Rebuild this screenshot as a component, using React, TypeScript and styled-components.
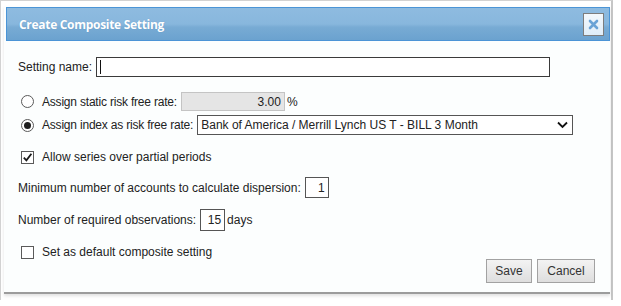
import React from "react";
import styled, { createGlobalStyle } from "styled-components";

const Global = createGlobalStyle`
  html, body { margin: 0; padding: 0; background: #ffffff; }
  body { font-family: "Segoe UI", "Liberation Sans", Arial, sans-serif; font-size: 12px; color: #222; }
  * { box-sizing: border-box; }
`;

const Frame = styled.div`
  width: 613px;
  height: 300px;
  border-left: 1px solid #d2d2d2;
  border-top: 1px solid #d2d2d2;
  border-right: 2px solid #c6c6c6;
  padding: 5px 1px 0 3px;
`;

const Dialog = styled.div`
  height: 288px;
  background: #fcfefe;
  border-bottom: 2px solid #9c9c9c;
  box-shadow: 0 2px 3px rgba(0, 0, 0, 0.12);
  display: flex;
  flex-direction: column;
`;

const TitleBar = styled.div`
  margin: 1px 0 0 2px;
  height: 34px;
  border: 1px solid #4b94d6;
  background: linear-gradient(180deg, #8ebbe0 0%, #88b7dd 50%, #78abd4 60%, #6ba2cf 100%);
  display: flex;
  align-items: center;
  justify-content: space-between;
  padding: 0 5px 0 12px;
`;

const Title = styled.div`
  color: #ffffff;
  font-family: "Open Sans", "Noto Sans", sans-serif;
  font-weight: 700;
  font-size: 12px;
  letter-spacing: -0.3px;
  text-shadow: 0 0 1px rgba(60, 110, 160, 0.4);
`;

const CloseButton = styled.div`
  width: 21px;
  height: 23px;
  border: 1px solid #7d7d7d;
  background: linear-gradient(180deg, #f3f8fc 0%, #dfedf8 100%);
  display: flex;
  align-items: center;
  justify-content: center;
`;

const Body = styled.div`
  flex: 1;
  padding: 16px 16px 0 14px;
  display: flex;
  flex-direction: column;
  position: relative;
`;

const Row = styled.div<{ $mt?: number }>`
  display: flex;
  align-items: center;
  margin-top: ${(p) => p.$mt ?? 0}px;
  white-space: nowrap;
`;

const Label = styled.span<{ $ml?: number; $ls?: number }>`
  margin-left: ${(p) => p.$ml ?? 0}px;
  margin-right: 4px;
  letter-spacing: ${(p) => p.$ls ?? 0}px;
`;

const TextInput = styled.div<{ $w: number; $h?: number; $align?: string; $bg?: string; $border?: string }>`
  width: ${(p) => p.$w}px;
  height: ${(p) => p.$h ?? 20}px;
  border: 1px solid ${(p) => p.$border ?? "#3a3a3a"};
  background: ${(p) => p.$bg ?? "#ffffff"};
  display: flex;
  align-items: center;
  justify-content: ${(p) => (p.$align === "right" ? "flex-end" : "flex-start")};
  padding: 0 3px;
`;

const Caret = styled.div`
  width: 1px;
  height: 14px;
  background: #111;
`;

const Suffix = styled.span`
  margin-left: 2px;
`;

const Radio = styled.span<{ $checked?: boolean }>`
  width: 13px;
  height: 13px;
  border-radius: 50%;
  border: 1px solid #5a5a5a;
  background: #fff;
  margin-left: 3px;
  display: inline-flex;
  align-items: center;
  justify-content: center;
  &::after {
    content: "";
    width: 7px;
    height: 7px;
    border-radius: 50%;
    background: ${(p) => (p.$checked ? "#1e1e1e" : "transparent")};
  }
`;

const Check = styled.span`
  width: 13px;
  height: 13px;
  border: 1px solid #5a5a5a;
  background: #fff;
  margin-left: 3px;
  display: inline-flex;
  align-items: center;
  justify-content: center;
`;

const Select = styled.div`
  width: 376px;
  height: 20px;
  border: 1px solid #555;
  background: #fff;
  display: flex;
  align-items: center;
  justify-content: space-between;
  padding: 0 4px 0 3px;
`;

const Buttons = styled.div`
  position: absolute;
  right: 15px;
  bottom: 9px;
  display: flex;
  gap: 5px;
`;

const Button = styled.button<{ $w: number }>`
  width: ${(p) => p.$w}px;
  height: 24px;
  border: 1px solid #a2a2a2;
  background: linear-gradient(180deg, #f3f3f3 0%, #dedede 100%);
  font-family: inherit;
  font-size: 12px;
  color: #333;
  padding: 0;
`;

export default function App() {
  return (
    <>
      <Global />
      <Frame>
        <Dialog>
          <TitleBar>
            <Title>Create Composite Setting</Title>
            <CloseButton>
              <svg width="11" height="11" viewBox="0 0 11 11">
                <path d="M2 2 L9 9 M9 2 L2 9" stroke="#6aa3d6" strokeWidth="2.6" strokeLinecap="round" />
              </svg>
            </CloseButton>
          </TitleBar>
          <Body>
            <Row>
              <Label>Setting name:</Label>
              <TextInput $w={454}>
                <Caret />
              </TextInput>
            </Row>
            <Row $mt={15}>
              <Radio />
              <Label $ml={8} $ls={-0.2}>Assign static risk free rate:</Label>
              <TextInput $w={104} $h={19} $align="right" $bg="#e5e5e5" $border="#c4c4c4">
                3.00
              </TextInput>
              <Suffix>%</Suffix>
            </Row>
            <Row $mt={4}>
              <Radio $checked />
              <Label $ml={8} $ls={-0.2}>Assign index as risk free rate:</Label>
              <Select>
                <span>Bank of America / Merrill Lynch US T - BILL 3 Month</span>
                <svg width="11" height="8" viewBox="0 0 11 8">
                  <path d="M1 1.5 L5.5 6 L10 1.5" stroke="#111" strokeWidth="1.8" fill="none" />
                </svg>
              </Select>
            </Row>
            <Row $mt={15}>
              <Check>
                <svg width="11" height="11" viewBox="0 0 11 11">
                  <path d="M1.8 5.6 L4.4 8.3 L9.4 1.8" stroke="#1a1a1a" strokeWidth="1.8" fill="none" />
                </svg>
              </Check>
              <Label $ml={8}>Allow series over partial periods</Label>
            </Row>
            <Row $mt={13}>
              <Label>Minimum number of accounts to calculate dispersion:</Label>
              <TextInput $w={24} $h={21} $align="right" $border="#555">
                1
              </TextInput>
            </Row>
            <Row $mt={11}>
              <Label>Number of required observations:</Label>
              <TextInput $w={25} $h={22} $align="right" $border="#555">
                15
              </TextInput>
              <Suffix>days</Suffix>
            </Row>
            <Row $mt={14}>
              <Check />
              <Label $ml={8}>Set as default composite setting</Label>
            </Row>
            <Buttons>
              <Button $w={46}>Save</Button>
              <Button $w={58}>Cancel</Button>
            </Buttons>
          </Body>
        </Dialog>
      </Frame>
    </>
  );
}
